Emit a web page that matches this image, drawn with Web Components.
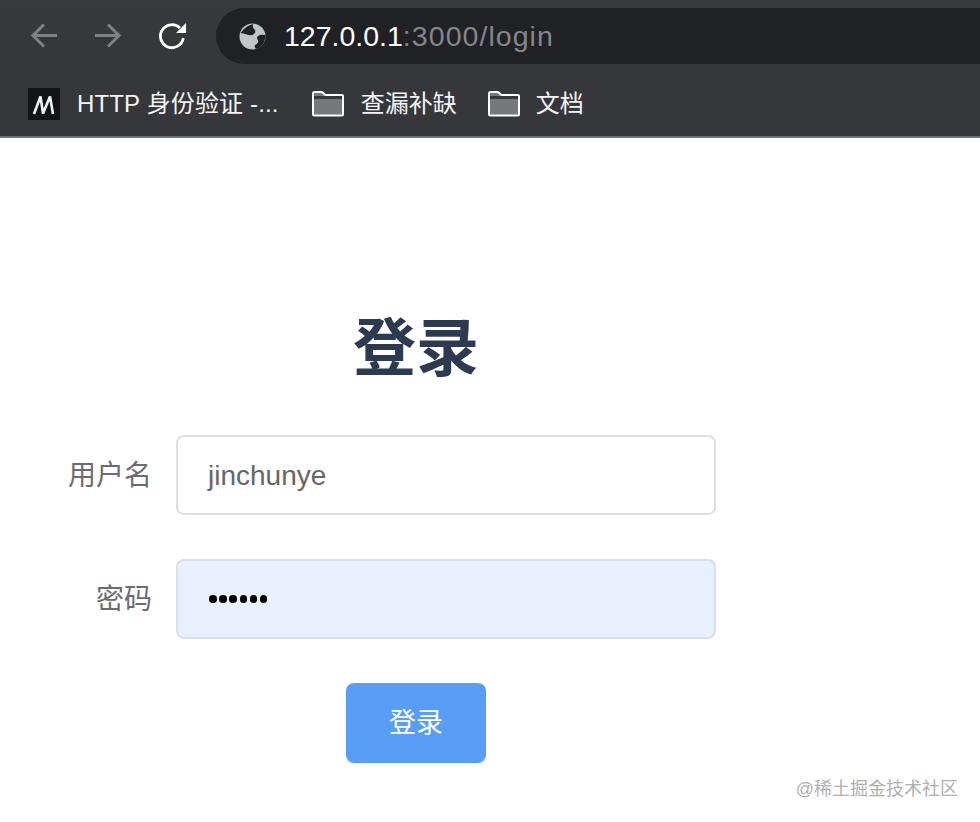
<!DOCTYPE html>
<html lang="zh"><head><meta charset="utf-8"><title>登录</title>
<style>html,body{margin:0;background:#fff}body{width:980px;height:822px;overflow:hidden;position:relative;font-family:"Liberation Sans","Noto Sans CJK SC",sans-serif}</style></head>
<body>
<browser-chrome></browser-chrome>
<login-form></login-form>
<water-mark>@稀土掘金技术社区</water-mark>
<script>
const F='"Liberation Sans","Noto Sans CJK SC",sans-serif';
class BookmarkItem extends HTMLElement{
  constructor(){super();const s=this.attachShadow({mode:'open'});
  s.innerHTML=`<style>:host{display:inline-flex;align-items:center;height:32px;color:#f4f5f6;font:400 24px/32px ${F}}
  .i{display:flex;margin-right:var(--icon-gap,17px)}</style><span class="i"><slot name="icon"></slot></span><slot></slot>`}
}
customElements.define('bookmark-item',BookmarkItem);
class BrowserChrome extends HTMLElement{
  constructor(){super();const s=this.attachShadow({mode:'open'});
  const folder=`<svg slot="icon" width="32" height="26" viewBox="0 0 32 26"><path d="M1 2.500A1.500 1.500 0 0 1 2.500 1H10L13.500 4H30A1 1 0 0 1 31 5V23.500A1 1 0 0 1 30 24.500H2A1 1 0 0 1 1 23.500Z" fill="#77787b" stroke="#fff" stroke-width="2" stroke-linejoin="round"/><path d="M2 5H30V8H2Z" fill="#36373b"/></svg>`;
  s.innerHTML=`<style>
  :host{display:block;height:138px;box-sizing:border-box;background:#36373b;border-bottom:2px solid #707174;font-family:${F}}
  .top{height:72px;display:flex;align-items:flex-start;padding-top:8px;box-sizing:border-box;background:linear-gradient(#393a3e,#35363a)}
  .nav{width:216px;height:56px;display:flex;align-items:center;padding-left:28px;box-sizing:border-box;gap:34px}
  .nav svg{display:block;flex:none}
  .pill{flex:1;height:56px;background:#202125;border-radius:28px 0 0 28px;display:flex;align-items:center;padding-left:23px}
  .url{margin-left:18px;font:400 28.500px/56px ${F};color:#fff;white-space:nowrap}
  .url span{color:#85868a;letter-spacing:1.050px}
  .marks{height:64px;display:flex;align-items:center;padding-left:28px;box-sizing:border-box}
  .first{letter-spacing:.15px;margin-right:33px}
  .second{margin-right:31px}
  </style>
  <div class="top"><div class="nav">
  <svg width="30" height="28" viewBox="0 0 30 28" fill="none" stroke="#808184" stroke-width="3"><path d="M29 13.500H5.500M16 2.500 5 13.500l11 11"/></svg>
  <svg width="30" height="28" viewBox="0 0 30 28" fill="none" stroke="#808184" stroke-width="3"><path d="M3 13.500H26.500M16 2.500l11 11-11 11"/></svg>
  <svg width="30" height="30" viewBox="0 0 30 30" fill="none"><path d="M24 7A11.500 11.500 0 1 0 27.300 17" stroke="#fff" stroke-width="2.800"/><path d="M30 2V12H20Z" fill="#fff"/></svg>
  </div>
  <div class="pill">
  <svg width="27" height="27" viewBox="0 0 27 27"><circle cx="13.500" cy="13.500" r="13" fill="#c3c4c6"/><path d="M4 7Q8 2.500 14 1Q13 5 16 7Q17.500 10 13.500 12Q9 12.500 6 11Q3 10 1.500 10Z" fill="#202125"/><path d="M26.500 12Q22 11 19 13Q17 15 19 17Q20 20 16 22Q15 24 17 26Q25 24 26.500 14Z" fill="#202125"/></svg>
  <div class="url">127.0.0.1<span>:3000/login</span></div></div></div>
  <div class="marks">
  <bookmark-item class="first"><svg slot="icon" width="32" height="32" viewBox="0 0 32 32"><rect width="32" height="32" fill="#121316"/><path d="M6 26 12.500 8.500 15 25.500 22 8.500 25 26" fill="none" stroke="#f2f2f2" stroke-width="2.600" stroke-linejoin="bevel"/></svg>HTTP 身份验证 -...</bookmark-item>
  <bookmark-item class="second">${folder}查漏补缺</bookmark-item>
  <bookmark-item style="--icon-gap:16px">${folder}文档</bookmark-item>
  </div>`}
}
customElements.define('browser-chrome',BrowserChrome);
class FormRow extends HTMLElement{
  constructor(){super();const s=this.attachShadow({mode:'open'});
  s.innerHTML=`<style>:host{display:flex;height:80px;margin-bottom:44px;font-family:${F}}
  label{width:96px;margin-right:24px;text-align:right;font:400 28px/82px ${F};color:#6a6c70;white-space:nowrap}
  .box{width:540px;height:80px;box-sizing:border-box;border:2px solid #dcdfe6;border-radius:8px;padding:0 30px;font:400 28px/78px ${F};color:#666;background:#fff}
  :host([filled]) .box{background:#e8f0fe;color:#000;border-color:#dcdfe8}
  </style><label><slot name="label"></slot></label><div class="box"><slot></slot></div>`}
}
customElements.define('form-row',FormRow);
class PasswordDots extends HTMLElement{
  constructor(){super();const s=this.attachShadow({mode:'open'});
  s.innerHTML=`<style>:host{display:flex;gap:2.700px;height:76px;align-items:center;margin-left:1px}i{width:7.500px;height:7.500px;border-radius:50%;background:#000}</style>`+'<i></i>'.repeat(6)}
}
customElements.define('password-dots',PasswordDots);
class LoginForm extends HTMLElement{
  constructor(){super();const s=this.attachShadow({mode:'open'});
  s.innerHTML=`<style>:host{display:block;width:660px;margin-left:56px;padding-top:168px;font-family:${F}}
  h1{margin:0 0 49px 60px;text-align:center;font:700 63px/84px ${F};color:#2d3b50;height:80px}
  .act{margin-left:60px;text-align:center}
  button{width:140px;height:80px;border:0;border-radius:8px;background:#589ef8;color:#fff;font:400 27px/80px ${F};padding:0;display:inline-block;vertical-align:top}
  </style><h1>登录</h1>
  <form-row><span slot="label">用户名</span>jinchunye</form-row>
  <form-row filled><span slot="label">密码</span><password-dots></password-dots></form-row>
  <div class="act"><button>登录</button></div>`}
}
customElements.define('login-form',LoginForm);
class WaterMark extends HTMLElement{
  constructor(){super();const s=this.attachShadow({mode:'open'});
  s.innerHTML=`<style>:host{position:absolute;right:22px;top:777px;font:400 18px/24px ${F};color:#b0b0b0;white-space:nowrap}</style><slot></slot>`}
}
customElements.define('water-mark',WaterMark);
</script>
</body></html>
